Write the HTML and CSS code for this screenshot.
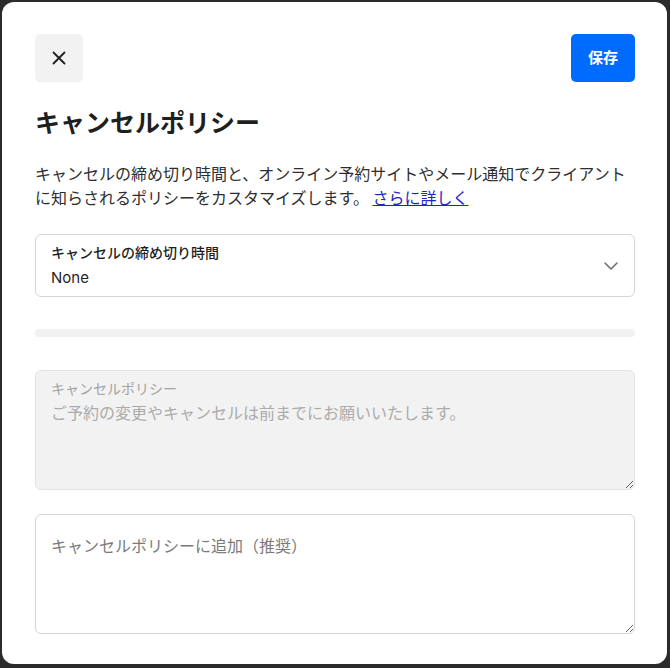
FILE: index.html
```html
<!DOCTYPE html>
<html lang="ja">
<head>
  <meta charset="UTF-8">
  <meta name="viewport" content="width=device-width, initial-scale=1">
  <title>キャンセルポリシー</title>
  <link rel="stylesheet" href="styles.css">
</head>
<body>
  <div class="modal">
    <div class="modal-header">
      <button class="close-btn" aria-label="閉じる">
        <svg width="14" height="14" viewBox="0 0 14 14">
          <path d="M1.5 1.5 L12.5 12.5 M12.5 1.5 L1.5 12.5" stroke="#1f1f1f" stroke-width="1.8" stroke-linecap="round" fill="none"/>
        </svg>
      </button>
      <button class="save-btn">保存</button>
    </div>

    <h1>キャンセルポリシー</h1>
    <p class="intro">キャンセルの締め切り時間と、オンライン予約サイトやメール通知でクライアントに知らされるポリシーをカスタマイズします。 <a href="#">さらに詳しく</a></p>

    <!-- Deadline select -->
    <div class="select-field">
      <div class="select-text">
        <span class="select-label">キャンセルの締め切り時間</span>
        <span class="select-value">None</span>
      </div>
      <svg class="chevron" width="14" height="8" viewBox="0 0 14 8">
        <path d="M1 1 L7 7 L13 1" stroke="#6f6f6f" stroke-width="1.6" stroke-linecap="round" stroke-linejoin="round" fill="none"/>
      </svg>
    </div>

    <div class="divider"></div>

    <!-- Policy text -->
    <div class="text-field disabled">
      <label class="float-label">キャンセルポリシー</label>
      <textarea class="area labelled" disabled>ご予約の変更やキャンセルは前までにお願いいたします。</textarea>
    </div>

    <div class="text-field">
      <textarea class="area" placeholder="キャンセルポリシーに追加（推奨）"></textarea>
    </div>
  </div>
</body>
</html>
```

FILE: styles.css
```css
* {
  box-sizing: border-box;
  margin: 0;
  padding: 0;
}
body {
  font-family: 'Inter', 'Noto Sans CJK JP', sans-serif;
  background: #2b2b2b;
  color: #1f1f1f;
  height: 668px;
  overflow: hidden;
}
.modal {
  margin: 2px 3px 0 2px;
  height: 662px;
  background: #fff;
  border-radius: 12px;
  padding: 32px 32px 0 33px;
  display: flex;
  flex-direction: column;
}
.modal-header {
  display: flex;
  justify-content: space-between;
  align-items: center;
  height: 48px;
}
.close-btn {
  width: 48px;
  height: 48px;
  border: none;
  border-radius: 5px;
  background: #f2f2f2;
  display: flex;
  align-items: center;
  justify-content: center;
}
.save-btn {
  width: 64px;
  height: 48px;
  border: none;
  border-radius: 5px;
  background: #006bff;
  color: #fff;
  font-family: 'Noto Sans CJK JP', sans-serif;
  font-size: 15px;
  line-height: 20px;
  font-weight: 700;
  padding-bottom: 2px;
}
h1 {
  margin-top: 23px;
  font-family: 'Noto Sans CJK JP', sans-serif;
  font-size: 25px;
  line-height: 32px;
  font-weight: 700;
  color: #1f1f1f;
}
.intro {
  margin-top: 24px;
  font-family: 'Noto Sans CJK JP', sans-serif;
  font-size: 16px;
  line-height: 24px;
  color: #2e2e2e;
}
.intro a {
  color: #2323c4;
  text-decoration: underline;
}
.select-field {
  margin-top: 25px;
  height: 63px;
  border: 1px solid #d6d6d6;
  border-radius: 6px;
  padding: 7px 16px 0 15px;
  display: flex;
  justify-content: space-between;
}
.select-text {
  display: flex;
  flex-direction: column;
}
.select-label {
  font-family: 'Noto Sans CJK JP', sans-serif;
  font-size: 14px;
  line-height: 20px;
  font-weight: 500;
  color: #1f1f1f;
}
.select-value {
  margin-top: 5px;
  font-size: 15px;
  line-height: 22px;
  color: #1f1f1f;
}
.chevron {
  margin-top: 20px;
}
.divider {
  margin-top: 32px;
  height: 8px;
  border-radius: 4px;
  background: #f1f1f1;
}
.text-field {
  position: relative;
  margin-top: 24px;
}
.text-field.disabled {
  margin-top: 33px;
}
.float-label {
  position: absolute;
  left: 16px;
  top: 8px;
  font-family: 'Noto Sans CJK JP', sans-serif;
  font-size: 14px;
  line-height: 20px;
  color: #a3a3a3;
}
.area {
  display: block;
  width: 100%;
  height: 120px;
  border: 1px solid #d6d6d6;
  border-radius: 6px;
  padding: 18px 15px 0;
  font-family: 'Noto Sans CJK JP', sans-serif;
  font-size: 16px;
  line-height: 24px;
  color: #1f1f1f;
  background: #fff;
  resize: vertical;
  outline: none;
}
.area::placeholder {
  color: #7a7a7a;
}
.area.labelled {
  padding-top: 29px;
}
.disabled .area {
  background: #f2f2f2;
  border-color: #e3e3e3;
  color: #ababab;
}
```
